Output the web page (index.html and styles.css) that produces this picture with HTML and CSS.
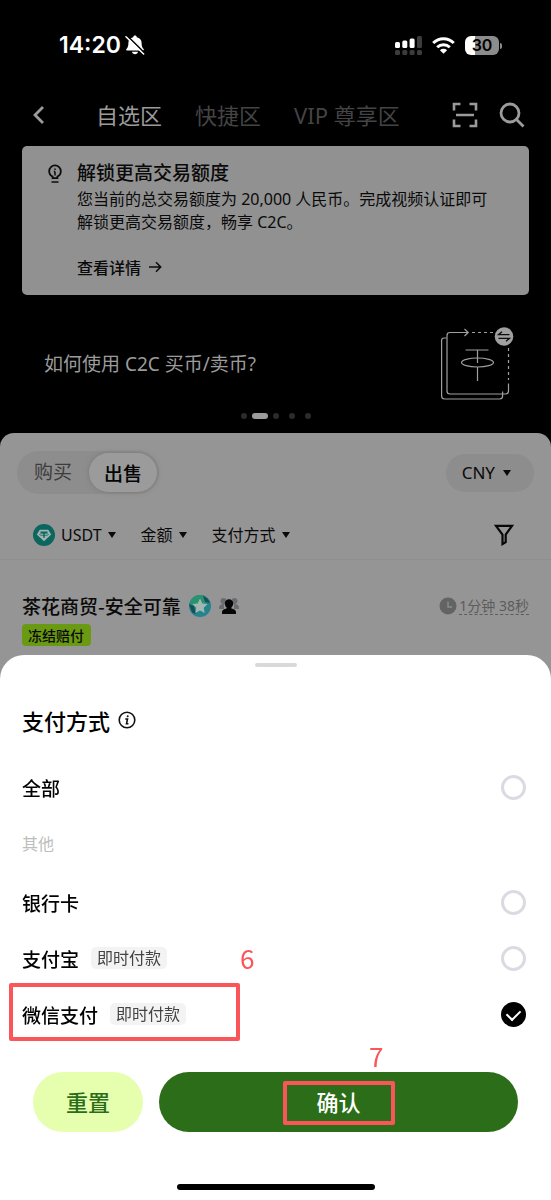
FILE: index.html
```html
<!DOCTYPE html>
<html lang="zh-CN">
<head>
<meta charset="utf-8">
<meta name="viewport" content="width=device-width, initial-scale=1">
<title>C2C 交易</title>
<link rel="stylesheet" href="styles.css">
</head>
<body>
<main class="market">
  <header class="top">
    <div class="status">
      <span class="clock">14:20</span>
      <svg class="bell" width="20" height="20" viewBox="0 0 20 20">
        <path d="M10 .6c1 0 1.700.7 1.800 1.600 3 .7 4.800 2.800 4.800 5.500 0 3.400.6 4.800 2 6.300.5.6.3 1.400-.6 1.400H2c-.9 0-1.100-.8-.6-1.400C2.800 12.500 3.400 11.100 3.400 7.700c0-2.700 1.800-4.800 4.800-5.500C8.300 1.300 9 .6 10 .6z" fill="#fff"/>
        <path d="M7 16.800h6c-.2 1.500-1.400 2.500-3 2.500s-2.800-1-3-2.500z" fill="#fff"/>
        <path d="M2.200.8l17.600 17.400" stroke="#000" stroke-width="1.600"/>
        <path d="M1 1.800l17.600 17.200" stroke="#fff" stroke-width="1.600" stroke-linecap="round"/>
      </svg>
      <span class="push"></span>
      <svg width="27" height="19" viewBox="0 0 27 19">
        <g fill="#fff"><rect x="0" y="6" width="5" height="6" rx="1.500"/><rect x="7.300" y="4.500" width="5" height="7.500" rx="1.500"/><rect x="14.600" y="2.500" width="5" height="9.500" rx="1.500"/></g>
        <g fill="#3c3c3c"><rect x="22" y="0" width="5" height="12" rx="1.500"/><rect x="0" y="14" width="5" height="5" rx="1.500"/><rect x="7.300" y="14" width="5" height="5" rx="1.500"/><rect x="14.600" y="14" width="5" height="5" rx="1.500"/><rect x="22" y="14" width="5" height="5" rx="1.500"/></g>
      </svg>
      <svg class="wifi" width="23" height="17" viewBox="0 0 23 17" fill="none" stroke="#fff" stroke-width="3">
        <path d="M1.200 6a14.600 14.600 0 0 1 20.600 0"/>
        <path d="M5.200 10.200a9 9 0 0 1 12.600 0"/>
        <path d="M11.500 16.800L7.900 13.200a5.200 5.200 0 0 1 7.200 0z" fill="#fff" stroke="none"/>
      </svg>
      <span class="battery">30</span>
    </div>
    <nav class="nav">
      <button class="icon-btn back" aria-label="返回"><svg width="14" height="20" viewBox="0 0 14 20" fill="none" stroke="#9b9b9b" stroke-width="2.800"><path d="M11 2L3 10l8 8"/></svg></button>
      <div class="tabs">
        <button class="tab active">自选区</button>
        <button class="tab">快捷区</button>
        <button class="tab">VIP 尊享区</button>
      </div>
      <button class="icon-btn" aria-label="扫一扫"><svg width="26" height="26" viewBox="0 0 26 26" fill="none" stroke="#9b9b9b" stroke-width="2.600"><path d="M2 8.500V2h6.500M17.500 2H24v6.500M24 17.500V24h-6.500M8.500 24H2v-6.500M4 13h18"/></svg></button>
      <button class="icon-btn search" aria-label="搜索"><svg width="26" height="26" viewBox="0 0 26 26" fill="none" stroke="#9b9b9b" stroke-width="2.800"><circle cx="11" cy="11" r="9"/><path d="M17.500 17.500l7 7"/></svg></button>
    </nav>
    <section class="notice">
      <svg class="bulb" width="14" height="20" viewBox="0 0 14 20" fill="none" stroke="#0c0c0c" stroke-width="1.800">
        <path d="M4.600 14.200v-1.600C2.500 11.600 1.200 9.700 1.200 7.200a5.800 5.800 0 0 1 11.600 0c0 2.500-1.300 4.400-3.400 5.400v1.600z"/>
        <path d="M3.500 18h7M7 7.500v4M5.800 7.500H7M7 4.500v1.500" stroke-width="1.500"/>
      </svg>
      <div>
        <h2 class="notice-title">解锁更高交易额度</h2>
        <p class="notice-text">您当前的总交易额度为 20,000 人民币。完成视频认证即可解锁更高交易额度，畅享 C2C。</p>
        <a class="notice-link" href="#details">查看详情
          <svg width="13" height="12" viewBox="0 0 13 12" fill="none" stroke="#0c0c0c" stroke-width="1.500"><path d="M0 6h11.500M7 1.300L11.700 6 7 10.700"/></svg></a>
      </div>
    </section>
    <section class="guide">
      <p class="guide-text">如何使用 C2C 买币/卖币?</p>
      <svg width="74" height="76" viewBox="0 0 74 76" fill="none" stroke="#a0a0a0" stroke-width="1.200">
        <path d="M5.500 12H3q-2.400 0-2.400 2.400V70q0 3 3 3h55q3 0 3-3v-4.500"/>
        <path d="M27 6.500H9q-3 0-3 3V65q0 3 3 3h55.500q3 0 3-3v-7.500"/>
        <path d="M23.500 3l3.700 3.500-3.700 3.500"/>
        <path d="M31 6.500h21M67.500 22v32" stroke-dasharray="3 3"/>
        <path d="M24.500 24h23M36.500 24v13M36.500 41v14"/>
        <ellipse cx="36.500" cy="36.500" rx="16" ry="4.500"/>
        <circle cx="63" cy="10.500" r="9.300" fill="#a0a0a0" stroke="none"/>
        <path d="M68.500 8.700h-11l3.500-3M57.500 12.300h11l-3.500 3" stroke="#0c0c0c" stroke-width="1.300"/>
      </svg>
    </section>
    <div class="dots"><i class="dot"></i><i class="dot on"></i><i class="dot"></i><i class="dot"></i><i class="dot"></i></div>
  </header>

  <section class="panel">
    <div class="mode-row">
      <div class="segment">
        <button class="seg">购买</button>
        <button class="seg selected">出售</button>
      </div>
      <button class="currency">CNY <i class="caret"></i></button>
    </div>
    <div class="filters">
      <button class="filter coin">
        <svg width="22" height="22" viewBox="0 0 22 22"><circle cx="11" cy="11" r="11" fill="#0b665e"/><path d="M6.800 5.700h8.400l3 4.800L11 17.200 3.800 10.500z" fill="#a0b4b2"/><path d="M7.500 8.300h7M11 8.300v5.400" stroke="#0b665e" stroke-width="1.500"/><ellipse cx="11" cy="10.500" rx="4.500" ry="1" fill="none" stroke="#0b665e" stroke-width=".7"/></svg>
        USDT <i class="caret"></i></button>
      <button class="filter">金额 <i class="caret"></i></button>
      <button class="filter">支付方式 <i class="caret"></i></button>
      <button class="icon-btn funnel" aria-label="筛选"><svg width="20" height="22" viewBox="0 0 20 22" fill="none" stroke="#080808" stroke-width="2.200"><path d="M2 1.800h16l-6.300 8.700v7.700l-3.200 1.900v-9.600z"/></svg></button>
    </div>
    <article class="offer">
      <div class="offer-head">
        <h3 class="merchant">茶花商贸-安全可靠</h3>
        <svg width="22" height="22" viewBox="0 0 22 22"><circle cx="11" cy="11" r="11" fill="#24848c"/><path d="M3.500 3A11 11 0 0 1 17 1.800L20 7 13 9l-9 9A11 11 0 0 1 3.500 3z" fill="#299370"/><path d="M14 .5l5 3.500 2 4-5-1zM0 9l5 2 2 8-4-1.500z" fill="#174e5e"/><path d="M11 3.500l2.300 4.900 5.300.7-3.900 3.700 1 5.300-4.700-2.600-4.700 2.600 1-5.300-3.900-3.700 5.300-.7z" fill="#a3b7b2"/></svg>
        <svg width="20" height="18" viewBox="0 0 20 18"><g fill="#6c6c70"><circle cx="4.500" cy="4" r="3"/><circle cx="15.500" cy="4" r="3"/><path d="M0 11q0-4 5-4v5H0zM20 11q0-4-5-4v5h5z"/></g><path d="M10 2.200a4.200 4.200 0 0 1 4.200 4.200c0 1.800-.8 3-1.800 4v1c2.600.6 4.600 1.800 4.600 3.600v2H3v-2c0-1.800 2-3 4.600-3.600v-1c-1-1-1.800-2.200-1.800-4A4.200 4.200 0 0 1 10 2.200z" fill="#060606"/></svg>
        <span class="push"></span>
        <svg class="timer" width="18" height="18" viewBox="0 0 18 18"><circle cx="9" cy="9" r="8.500" fill="#636363"/><path d="M9 4.500V10h4" fill="none" stroke="#8c8c8c" stroke-width="1.400"/></svg>
        <span class="speed">1分钟 38秒</span>
      </div>
      <span class="badge">冻结赔付</span>
    </article>
  </section>
</main>

<form class="sheet" role="dialog" aria-labelledby="sheet-title">
  <div class="grabber"></div>
  <div class="sheet-head">
    <h1 class="sheet-title" id="sheet-title">支付方式</h1>
    <svg width="18" height="18" viewBox="0 0 18 18" fill="none" stroke="#111" stroke-width="1.600"><circle cx="9" cy="9" r="7.800"/><path d="M7.300 8h2.200l-1 4.800h1.900"/><circle cx="9.700" cy="5.300" r="1" fill="#111" stroke="none"/></svg>
  </div>
  <div class="options">
    <label class="option" for="pay-all"><span class="name">全部</span><input class="radio" type="radio" name="pay" id="pay-all"></label>
    <p class="group">其他</p>
    <label class="option" for="pay-bank"><span class="name">银行卡</span><input class="radio" type="radio" name="pay" id="pay-bank"></label>
    <label class="option" for="pay-alipay"><span class="name">支付宝</span><span class="tag">即时付款</span><input class="radio" type="radio" name="pay" id="pay-alipay"></label>
    <label class="option" for="pay-wechat"><span class="name">微信支付</span><span class="tag">即时付款</span><input class="radio" type="radio" name="pay" id="pay-wechat" checked>
      <span class="mark mark-option"></span><span class="step step-option">6</span></label>
  </div>
  <div class="actions">
    <button class="btn reset" type="reset">重置</button>
    <button class="btn confirm" type="button">确认<span class="mark mark-confirm"></span><span class="step step-confirm">7</span></button>
  </div>
  <div class="home-bar"></div>
</form>
</body>
</html>
```

FILE: styles.css
```css
* { box-sizing: border-box; }

body {
  margin: 0;
  min-height: 100vh;
  background: #959595;
  color: #0a0a0a;
  font-family: "Noto Sans", "Noto Sans CJK SC", sans-serif;
  font-size: 16px;
}

h1, h2, h3, p { margin: 0; }
h1, h2, h3 { font-weight: 500; }

button {
  border: 0;
  padding: 0;
  background: none;
  color: inherit;
  font: inherit;
}

svg { display: block; flex: none; }
.push { flex: 1; }

.name, .notice-title, .notice-link, .merchant, .badge, .sheet-title, .btn, .seg.selected {
  font-family: "Noto Sans CJK SC", sans-serif;
  font-weight: 500;
}

/* Header */
.top {
  background: #000;
  padding-bottom: 14px;
}

.status {
  display: flex;
  align-items: center;
  height: 90px;
  padding: 0 52px 0 59px;
  color: #fff;
}

.clock {
  font: 600 23px/28px Inter, sans-serif;
}

.bell { margin-left: 4px; }
.wifi { margin: 0 10px; }

.battery {
  position: relative;
  width: 34px;
  border-radius: 6px;
  background: linear-gradient(90deg, #fff 30%, #8c8c8c 30%);
  color: #000;
  font: 600 16px/19px Inter, sans-serif;
  text-align: center;
}

.battery::after {
  content: "";
  position: absolute;
  right: -3px;
  top: 7px;
  width: 2px;
  height: 6px;
  border-radius: 0 2px 2px 0;
  background: #8c8c8c;
}

.nav {
  display: flex;
  align-items: center;
  height: 50px;
  padding: 0 26px 0 32px;
}

.tabs {
  flex: 1;
  display: flex;
  gap: 33px;
  padding-left: 50px;
}

.tab {
  color: #444;
  font-size: 22px;
  line-height: 32px;
  white-space: nowrap;
}

.tab.active { color: #9b9b9b; }
.search { margin-left: 21px; }

.notice {
  display: flex;
  gap: 15px;
  margin: 6px 22px 0;
  padding: 12px 32px 16px 26px;
  border-radius: 5px;
  background: #919191;
}

.bulb { margin-top: 6px; }
.notice-title { font-size: 19px; line-height: 28px; }
.notice-text { margin-top: 2px; line-height: 23px; }

.notice-link {
  display: flex;
  align-items: center;
  gap: 8px;
  margin-top: 21px;
  color: inherit;
  line-height: 24px;
  text-decoration: none;
}

.guide {
  display: flex;
  justify-content: space-between;
  align-items: center;
  margin-top: 31px;
  padding: 0 36px 0 44px;
}

.guide-text {
  color: #9b9b9b;
  font-size: 19px;
  line-height: 28px;
}

.dots {
  display: flex;
  justify-content: center;
  gap: 10px;
  margin-top: 11px;
}

.dot {
  width: 6px;
  height: 6px;
  border-radius: 3px;
  background: #2b2b2b;
}

.dot.on {
  width: 16px;
  margin: 0 -5px;
  background: #9b9b9b;
}

/* Offer list */
.market { background: #000; }

.panel {
  min-height: 400px;
  padding-top: 18px;
  border-radius: 14px 14px 0 0;
  background: #959595;
}

.mode-row {
  display: flex;
  justify-content: space-between;
  align-items: center;
  padding: 0 17px;
}

.segment {
  display: flex;
  gap: 2px;
  padding: 2px;
  border-radius: 22px;
  background: #8d8d8d;
}

.seg {
  width: 68px;
  border-radius: 20px;
  color: #3c3c3c;
  font-size: 19px;
  line-height: 39px;
}

.seg.selected {
  background: #9b9b9b;
  box-shadow: 0 0 5px #777;
  color: #050505;
}

.currency {
  display: flex;
  align-items: center;
  gap: 8px;
  padding: 0 23px 0 16px;
  border-radius: 19px;
  background: #8d8d8d;
  font-size: 17px;
  line-height: 38px;
}

.caret {
  border: 4px solid transparent;
  border-top: 6px solid #0a0a0a;
  border-bottom: 0;
}

.filters {
  display: flex;
  align-items: center;
  gap: 25px;
  height: 66px;
  padding: 16px 37px 0 33px;
  border-bottom: 1px solid #8e8e8e;
}

.filter {
  display: flex;
  align-items: center;
  gap: 6px;
  line-height: 24px;
  white-space: nowrap;
}

.funnel { margin-left: auto; }

.offer { padding: 32px 22px 0; }

.offer-head {
  display: flex;
  align-items: center;
  gap: 8px;
  line-height: 28px;
}

.merchant { font-size: 19px; }
.timer { margin-right: -6px; }

.speed {
  border-bottom: 1px dashed #5c5c5c;
  color: #5c5c5c;
  font-size: 14px;
  line-height: 16px;
}

.badge {
  display: inline-block;
  margin-top: 4px;
  padding: 0 7px 0 6px;
  border-radius: 4px;
  background: #6a9a12;
  font-size: 14px;
  line-height: 22px;
}

/* Payment sheet */
.sheet {
  position: fixed;
  left: 0;
  right: 0;
  bottom: 0;
  padding: 8px 0 10px;
  border-radius: 24px 24px 0 0;
  background: #fff;
  color: #000;
}

.grabber {
  width: 42px;
  height: 4px;
  margin: 0 auto;
  border-radius: 2px;
  background: #d9d9d9;
}

.sheet-head {
  display: flex;
  align-items: center;
  gap: 8px;
  margin-top: 32px;
  padding: 0 22px;
}

.sheet-title { font-size: 22px; line-height: 42px; }
.options { margin-top: 18px; }

.option {
  position: relative;
  display: flex;
  align-items: center;
  gap: 12px;
  height: 56px;
  padding: 0 25px 0 22px;
}

.name { font-size: 19px; }

.group {
  padding: 0 22px;
  color: #bdbdbd;
  line-height: 59px;
}

.tag {
  padding: 0 6px;
  border-radius: 5px;
  background: #f3f3f3;
  color: #444;
  line-height: 22px;
}

.radio {
  appearance: none;
  width: 25px;
  height: 25px;
  margin: 0 0 0 auto;
  border: 3px solid #dadae2;
  border-radius: 50%;
}

.radio:checked {
  display: grid;
  place-items: center;
  border: 0;
  background: #000;
}

.radio:checked::before {
  content: "";
  width: 11px;
  height: 7px;
  border: solid #fff;
  border-width: 0 0 2px 2px;
  transform: translateY(-1px) rotate(-45deg);
}

.actions {
  display: flex;
  gap: 16px;
  margin-top: 30px;
  padding: 0 33px;
}

.btn {
  position: relative;
  height: 60px;
  padding-bottom: 2px;
  border-radius: 30px;
  font-size: 22px;
}

.reset { width: 110px; background: #e6ffae; color: #2b6d18; }
.confirm { flex: 1; background: #2b6d18; color: #fff; }

.home-bar {
  width: 198px;
  height: 6px;
  margin: 52px auto 0;
  border-radius: 3px;
  background: #000;
}

/* Tutorial marks drawn over the controls */
.mark {
  position: absolute;
  border: 4px solid #fa5558;
  border-radius: 2px;
}

.mark-option { left: 9px; top: -3px; width: 231px; height: 58px; }
.mark-confirm { left: 50%; top: 9px; width: 112px; height: 44px; margin-left: -56px; }

.step {
  position: absolute;
  color: #fa5558;
  font: 26px/30px "Noto Sans CJK SC", sans-serif;
}

.step-option { left: 240px; top: -43px; }
.step-confirm { left: 210px; top: -31px; }
```
